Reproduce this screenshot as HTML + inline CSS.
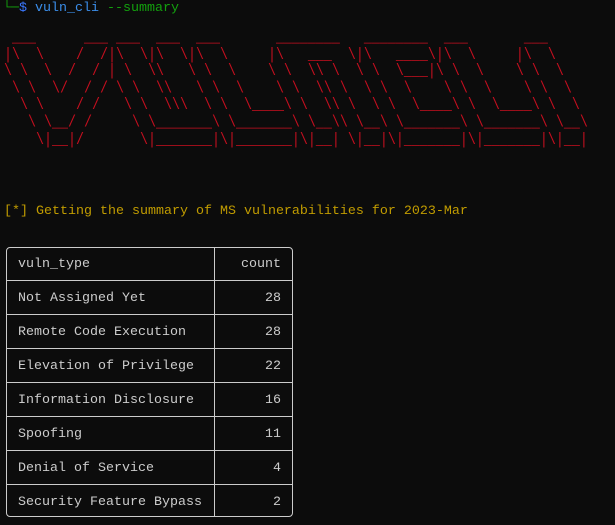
<!DOCTYPE html>
<html><head><meta charset="utf-8"><style>
html,body{margin:0;padding:0;background:#0c0c0c;width:615px;height:525px;overflow:hidden}
pre,div{font-family:"Liberation Mono","DejaVu Sans Mono",monospace;font-size:13.33px;line-height:17px;margin:0;position:absolute;white-space:pre}
.g{color:#13a10e}.b{color:#3b78ff}.c{color:#3b8eea}
#art{color:#c50f1f;left:4px;top:30px;line-height:13.6px;transform:scaleY(1.25);transform-origin:0 0}
#y{color:#c19c00;left:4px;top:203px}
#t{left:6px;top:247px;width:287px;height:270px;border:1.5px solid #cccccc;border-radius:4px;box-sizing:border-box}
.h{position:absolute;left:0;right:0;height:0;border-top:1.5px solid #cccccc}
.v{position:absolute;left:207px;top:0;bottom:0;border-left:1.5px solid #cccccc}
.r{position:absolute;left:0;width:285px;height:34px;color:#cccccc}
.r span{position:absolute;top:8px}
.r .a{left:11px}.r .n{right:11px}
</style></head><body>
<pre style="left:3px;top:0px"><span class="g">└─</span><span class="b">$</span> <span class="c">vuln_cli</span> <span class="g">--summary</span></pre>
<pre id="art"> ___      ___ ___  ___  ___       ________   ________  ___       ___
|\  \    /  /|\  \|\  \|\  \     |\   ___  \|\   ____\|\  \     |\  \
\ \  \  /  / | \  \\   \ \  \    \ \  \\ \  \ \  \___|\ \  \    \ \  \
 \ \  \/  / / \ \  \\   \ \  \    \ \  \\ \  \ \  \    \ \  \    \ \  \
  \ \    / /   \ \  \\\  \ \  \____\ \  \\ \  \ \  \____\ \  \____\ \  \
   \ \__/ /     \ \_______\ \_______\ \__\\ \__\ \_______\ \_______\ \__\
    \|__|/       \|_______|\|_______|\|__| \|__|\|_______|\|_______|\|__|</pre>
<pre id="y">[*] Getting the summary of MS vulnerabilities for 2023-Mar</pre>
<div id="t">
<div class="v"></div>
<div class="h" style="top:32px"></div>
<div class="h" style="top:66px"></div>
<div class="h" style="top:100px"></div>
<div class="h" style="top:134px"></div>
<div class="h" style="top:168px"></div>
<div class="h" style="top:202px"></div>
<div class="h" style="top:236px"></div>
<div class="r" style="top:0px"><span class="a">vuln_type</span><span class="n">count</span></div>
<div class="r" style="top:34px"><span class="a">Not Assigned Yet</span><span class="n">28</span></div>
<div class="r" style="top:68px"><span class="a">Remote Code Execution</span><span class="n">28</span></div>
<div class="r" style="top:102px"><span class="a">Elevation of Privilege</span><span class="n">22</span></div>
<div class="r" style="top:136px"><span class="a">Information Disclosure</span><span class="n">16</span></div>
<div class="r" style="top:170px"><span class="a">Spoofing</span><span class="n">11</span></div>
<div class="r" style="top:204px"><span class="a">Denial of Service</span><span class="n">4</span></div>
<div class="r" style="top:238px"><span class="a">Security Feature Bypass</span><span class="n">2</span></div>
</div>
</body></html>
